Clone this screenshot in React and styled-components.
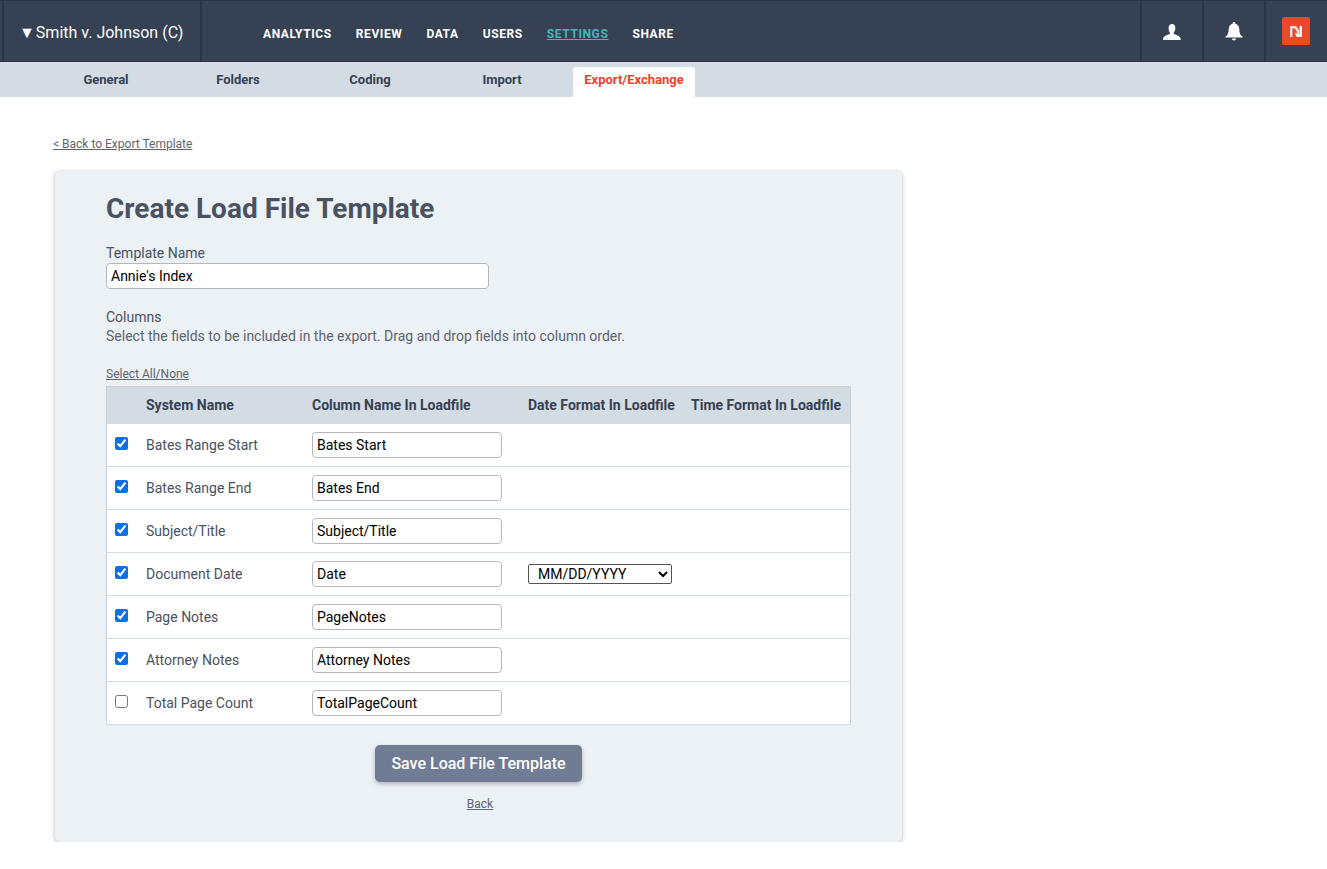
import React from 'react';
import styled, { createGlobalStyle } from 'styled-components';

const GlobalStyle = createGlobalStyle`
  html, body {
    margin: 0;
    padding: 0;
    background: #fff;
    font-family: Roboto, "Liberation Sans", sans-serif;
  }
`;

const TopBar = styled.header`
  display: flex;
  align-items: stretch;
  height: 62px;
  padding: 0 1px 0 2px;
  box-sizing: border-box;
  background: #364153;
  border-top: 1px solid #2b3445;
  border-bottom: 1px solid #2b3445;
`;

const CaseName = styled.div`
  display: flex;
  align-items: center;
  width: 200px;
  padding: 2px 0 0 15px;
  box-sizing: border-box;
  border-left: 2px solid #2b3445;
  border-right: 2px solid #2b3445;
  color: #fff;
  font-size: 16px;
  white-space: nowrap;
`;

const Arrow = styled.span`
  margin-right: 1px;
`;

const NavList = styled.nav`
  display: flex;
  align-items: center;
  gap: 24px;
  padding: 5px 0 0 61px;
  flex: 1;
`;

const NavLink = styled.a`
  color: ${p => (p.$active ? '#4fb0b8' : '#fff')};
  font-size: 12px;
  font-weight: 700;
  letter-spacing: 0.6px;
  text-decoration: ${p => (p.$active ? 'underline' : 'none')};
`;

const IconCell = styled.div`
  display: flex;
  align-items: center;
  justify-content: center;
  width: 62px;
  padding-top: 1px;
  box-sizing: border-box;
  border-left: 2px solid #2b3445;
`;

const LogoBadge = styled.svg`
  width: 28px;
  height: 28px;
  margin-bottom: 2px;
  display: block;
`;

const SubBar = styled.div`
  display: flex;
  align-items: flex-end;
  height: 35px;
  padding-left: 40px;
  background: #d3dbe3;
`;

const Tab = styled.a`
  width: 122px;
  height: 30px;
  margin: 0 5px;
  padding-bottom: 5px;
  box-sizing: border-box;
  display: flex;
  align-items: center;
  justify-content: center;
  border-radius: 3px 3px 0 0;
  background: ${p => (p.$active ? '#fff' : 'transparent')};
  color: ${p => (p.$active ? '#ef4126' : '#364153')};
  font-size: 13px;
  font-weight: 700;
`;

const Page = styled.main`
  padding: 40px 0 0 53px;
`;

const SmallLink = styled.a`
  color: #60646c;
  font-size: 12px;
  line-height: 14px;
  text-decoration: underline;
`;

const TopLink = styled(SmallLink)`
  display: block;
`;

const Card = styled.section`
  width: 847px;
  height: 671px;
  margin: 20px 0 0 2px;
  padding: 21px 51px 0;
  box-sizing: border-box;
  background: #ecf1f5;
  border-radius: 5px;
  box-shadow: 0 1px 4px rgba(0, 0, 0, 0.3);
`;

const Title = styled.h1`
  margin: 0;
  color: #4a5160;
  font-size: 28px;
  line-height: 33px;
  font-weight: 700;
`;

const FieldLabel = styled.label`
  display: block;
  margin: 20px 0 2px;
  color: #4a5160;
  font-size: 14px;
  line-height: 16px;
`;

const TextInput = styled.input`
  display: block;
  width: ${p => p.$width}px;
  height: 26px;
  padding: 0 4px;
  box-sizing: border-box;
  background: #fff;
  border: 1px solid #b4b8bd;
  border-radius: 4px;
  outline: none;
  color: #000;
  font-family: Roboto, "Liberation Sans", sans-serif;
  font-size: 14px;
`;

const SectionLabel = styled.div`
  margin-top: 20px;
  color: #4a5160;
  font-size: 14px;
  line-height: 16px;
`;

const HelpText = styled.p`
  margin: 3px 0 0;
  color: #5d6470;
  font-size: 14px;
  line-height: 16px;
`;

const SelectAll = styled(SmallLink)`
  display: block;
  margin-top: 23px;
  margin-bottom: 5px;
`;

const FieldTable = styled.table`
  width: 745px;
  table-layout: fixed;
  border-collapse: separate;
  border-spacing: 0;
  background: #fff;
  border: 1px solid #c9d1d9;
  border-bottom-color: #d3dbe3;
`;

const HeadRow = styled.tr`
  height: 36px;
  background: #d3dbe3;
`;

const HeadCell = styled.th`
  width: ${p => p.$width}px;
  padding: 0;
  color: #364153;
  font-size: 14px;
  font-weight: 700;
  text-align: left;
  white-space: nowrap;
`;

const Cell = styled.td`
  height: 42px;
  padding: 0;
  border-top: 1px solid #d3dbe3;
  color: #4a5160;
  font-size: 14px;
  &:first-child {
    padding-left: 8px;
  }
`;

const Check = styled.input`
  display: block;
  width: 13px;
  height: 13px;
  margin: 0 0 3px;
  accent-color: #0b6fe5;
`;

const DateSelect = styled.select`
  display: block;
  width: 144px;
  height: 20px;
  padding-left: 5px;
  background: #fff;
  border: 1px solid #555;
  border-radius: 2px;
  color: #000;
  font-family: Roboto, "Liberation Sans", sans-serif;
  font-size: 14px;
`;

const SaveRow = styled.div`
  display: flex;
  justify-content: center;
  margin-top: 20px;
`;

const SaveButton = styled.button`
  width: 207px;
  height: 37px;
  padding: 0;
  background: #6f7c94;
  border: none;
  border-radius: 5px;
  box-shadow: 0 2px 4px rgba(0, 0, 0, 0.25);
  color: #fff;
  font-family: Roboto, "Liberation Sans", sans-serif;
  font-size: 16px;
  font-weight: 500;
`;

const BackRow = styled.div`
  display: flex;
  justify-content: center;
  margin-top: 15px;
  padding-left: 3px;
`;

const navItems = ['ANALYTICS', 'REVIEW', 'DATA', 'USERS', 'SETTINGS', 'SHARE'];
const tabs = ['General', 'Folders', 'Coding', 'Import', 'Export/Exchange'];
const fields = [
  { name: 'Bates Range Start', column: 'Bates Start', checked: true },
  { name: 'Bates Range End', column: 'Bates End', checked: true },
  { name: 'Subject/Title', column: 'Subject/Title', checked: true },
  { name: 'Document Date', column: 'Date', checked: true, date: true },
  { name: 'Page Notes', column: 'PageNotes', checked: true },
  { name: 'Attorney Notes', column: 'Attorney Notes', checked: true },
  { name: 'Total Page Count', column: 'TotalPageCount', checked: false },
];

function UserIcon() {
  return (
    <svg width="18" height="16" viewBox="0 0 18 16" fill="#fff">
      <path d="M9 0c2.300 0 3.400 1.700 3.400 4 0 1.800-.7 3.300-1.500 4.300-.4.5-.4 1.400.2 1.800 1 .6 4 1.500 5.300 2.600.9.700 1.300 1.800 1.400 3.300H-.2c.1-1.500.5-2.600 1.400-3.300 1.300-1.100 4.300-2 5.300-2.600.6-.4.6-1.300.2-1.800C5.900 7.300 5.600 5.800 5.600 4 5.600 1.700 6.700 0 9 0z" />
    </svg>
  );
}

function BellIcon() {
  return (
    <svg width="18" height="19" viewBox="0 0 18 19" fill="#fff">
      <path d="M9 0c.8 0 1.300.5 1.300 1.300v.5c2.700.6 4 2.700 4 5.300 0 3 .6 5 1.700 6.200.5.500 1 .9 1.500 1.200v.9H.5v-.9c.5-.3 1-.7 1.500-1.200C3.100 12.100 3.700 10.100 3.700 7.100c0-2.600 1.300-4.700 4-5.300v-.5C7.700.5 8.200 0 9 0z" />
      <path d="M7 16.500h4c0 1.200-.9 2-2 2s-2-.8-2-2z" />
    </svg>
  );
}

function Logo() {
  return (
    <LogoBadge viewBox="0 0 28 28">
      <rect width="28" height="28" rx="2.500" fill="#e8492b" />
      <path d="M8 9h6l3.200 4.200V20h-2.400v-5.800L12.800 11.400H10.400V20H8z" fill="#f6e3dd" />
      <path d="M20 20h-5l-1.500-2V15l1.500 2.600h2.600V9H20z" fill="#fff" />
    </LogoBadge>
  );
}

export default function App() {
  return (
    <>
      <GlobalStyle />
      <TopBar>
        <CaseName>
          <Arrow>▼</Arrow>Smith v. Johnson (C)
        </CaseName>
        <NavList>
          {navItems.map(item => (
            <NavLink key={item} $active={item === 'SETTINGS'}>
              {item}
            </NavLink>
          ))}
        </NavList>
        <IconCell>
          <UserIcon />
        </IconCell>
        <IconCell>
          <BellIcon />
        </IconCell>
        <IconCell>
          <Logo />
        </IconCell>
      </TopBar>
      <SubBar>
        {tabs.map(tab => (
          <Tab key={tab} $active={tab === 'Export/Exchange'}>
            {tab}
          </Tab>
        ))}
      </SubBar>
      <Page>
        <TopLink>&lt; Back to Export Template</TopLink>
        <Card>
          <Title>Create Load File Template</Title>
          <FieldLabel>Template Name</FieldLabel>
          <TextInput $width={383} defaultValue="Annie's Index" />
          <SectionLabel>Columns</SectionLabel>
          <HelpText>
            Select the fields to be included in the export. Drag and drop fields into column order.
          </HelpText>
          <SelectAll>Select All/None</SelectAll>
          <FieldTable>
            <thead>
              <HeadRow>
                <HeadCell $width={39} />
                <HeadCell $width={166}>System Name</HeadCell>
                <HeadCell $width={216}>Column Name In Loadfile</HeadCell>
                <HeadCell $width={163}>Date Format In Loadfile</HeadCell>
                <HeadCell $width={159}>Time Format In Loadfile</HeadCell>
              </HeadRow>
            </thead>
            <tbody>
              {fields.map(field => (
                <tr key={field.name}>
                  <Cell>
                    <Check type="checkbox" defaultChecked={field.checked} />
                  </Cell>
                  <Cell>{field.name}</Cell>
                  <Cell>
                    <TextInput $width={190} defaultValue={field.column} />
                  </Cell>
                  <Cell>
                    {field.date && (
                      <DateSelect defaultValue="MM/DD/YYYY">
                        <option>MM/DD/YYYY</option>
                      </DateSelect>
                    )}
                  </Cell>
                  <Cell />
                </tr>
              ))}
            </tbody>
          </FieldTable>
          <SaveRow>
            <SaveButton>Save Load File Template</SaveButton>
          </SaveRow>
          <BackRow>
            <SmallLink>Back</SmallLink>
          </BackRow>
        </Card>
      </Page>
    </>
  );
}
